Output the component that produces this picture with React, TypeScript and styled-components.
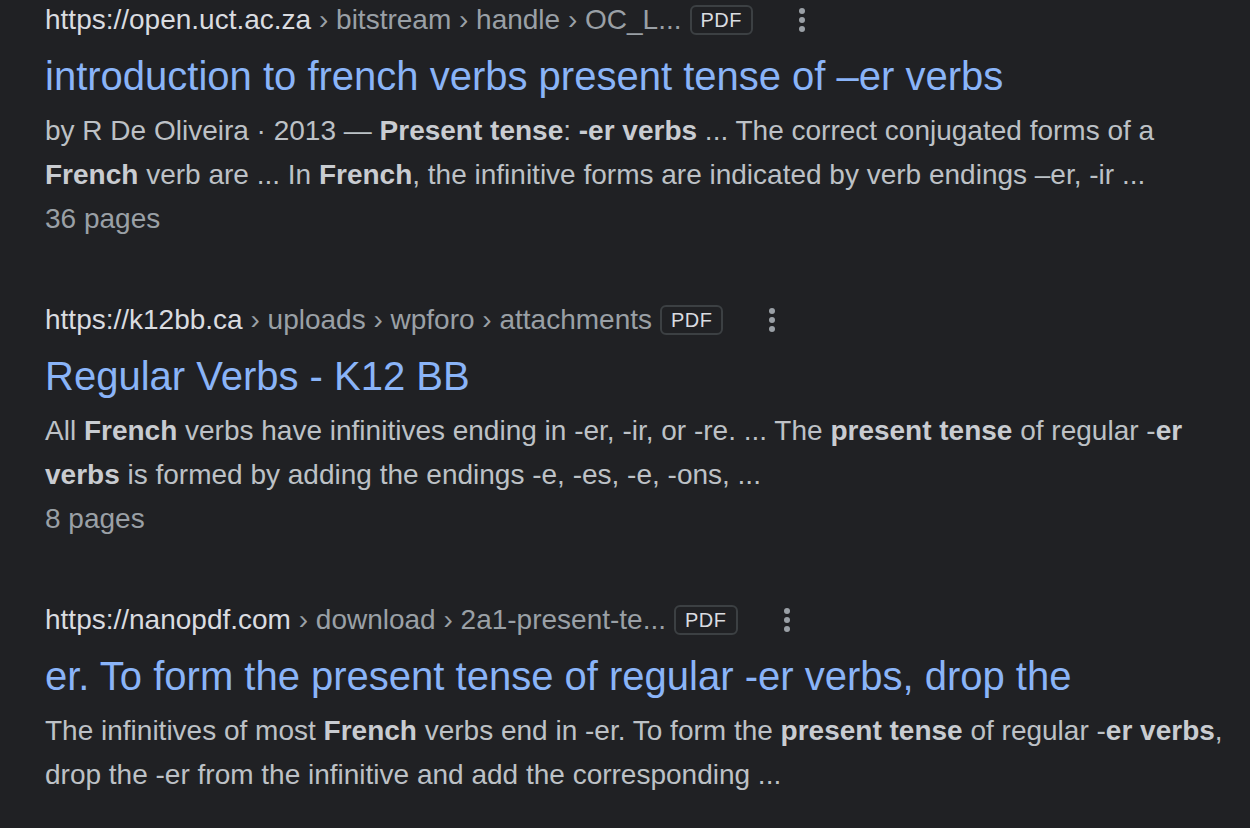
import React from "react";
import styled, { createGlobalStyle } from "styled-components";

const Global = createGlobalStyle`
  html, body { margin: 0; padding: 0; background: #202124; }
  body { font-family: "Liberation Sans", Arial, sans-serif; }
`;

const Page = styled.div`
  background: #202124;
  min-height: 828px;
  padding-left: 45px;
  overflow: hidden;
`;

const List = styled.div`
  display: flex;
  flex-direction: column;
  gap: 59px;
  width: 1190px;
`;

const Result = styled.div`
  display: flex;
  flex-direction: column;
`;

const UrlRow = styled.div`
  display: flex;
  align-items: center;
  height: 40px;
  font-size: 28px;
  line-height: 40px;
  white-space: nowrap;
`;

const Cite = styled.cite`
  font-style: normal;
  color: #dadce0;
`;

const Path = styled.span`
  color: #9aa0a6;
`;

const Badge = styled.span`
  display: inline-flex;
  align-items: center;
  box-sizing: border-box;
  height: 30px;
  margin-left: 8px;
  padding: 0 9px;
  border: 2px solid #3c4043;
  border-radius: 6px;
  font-size: 20px;
  color: #dadce0;
  letter-spacing: 0.5px;
`;

const Kebab = styled.svg`
  width: 36px;
  height: 36px;
  margin-left: 31px;
  fill: #9aa0a6;
`;

const Title = styled.div`
  margin-top: 10px;
  font-size: 40px;
  line-height: 52px;
  color: #8ab4f8;
  white-space: nowrap;
`;

const Snippet = styled.div`
  margin-top: 7px;
  font-size: 28px;
  line-height: 44px;
  color: #bdc1c6;
  b { font-weight: bold; color: #c9ccd1; }
`;

const Pages = styled.div`
  font-size: 28px;
  line-height: 44px;
  color: #9aa0a6;
`;

type R = {
  domain: string;
  path: string;
  title: string;
  snippet: React.ReactNode;
  pages?: string;
};

const results: R[] = [
  {
    domain: "https://open.uct.ac.za",
    path: "\u00a0› bitstream › handle › OC_L...",
    title: "introduction to french verbs present tense of –er verbs",
    snippet: (
      <>
        by R De Oliveira · 2013 — <b>Present tense</b>: <b>-er verbs</b> ... The correct
        conjugated forms of a <b>French</b> verb are ... In <b>French</b>, the infinitive forms
        are indicated by verb endings –er, -ir ...
      </>
    ),
    pages: "36 pages",
  },
  {
    domain: "https://k12bb.ca",
    path: "\u00a0› uploads › wpforo › attachments",
    title: "Regular Verbs - K12 BB",
    snippet: (
      <>
        All <b>French</b> verbs have infinitives ending in -er, -ir, or -re. ... The{" "}
        <b>present tense</b> of regular -<b>er verbs</b> is formed by adding the endings -e,
        -es, -e, -ons, ...
      </>
    ),
    pages: "8 pages",
  },
  {
    domain: "https://nanopdf.com",
    path: "\u00a0› download › 2a1-present-te...",
    title: "er. To form the present tense of regular -er verbs, drop the",
    snippet: (
      <>
        The infinitives of most <b>French</b> verbs end in -er. To form the{" "}
        <b>present tense</b> of regular -<b>er verbs</b>, drop the -er from the infinitive and
        add the corresponding ...
      </>
    ),
  },
];

const MoreIcon = () => (
  <Kebab viewBox="0 0 24 24" aria-hidden>
    <circle cx="12" cy="6" r="2" />
    <circle cx="12" cy="12" r="2" />
    <circle cx="12" cy="18" r="2" />
  </Kebab>
);

export default function App() {
  return (
    <>
      <Global />
      <Page>
        <List>
          {results.map((r, i) => (
            <Result key={i}>
              <UrlRow>
                <Cite>
                  {r.domain}
                  <Path>{r.path}</Path>
                </Cite>
                <Badge>PDF</Badge>
                <MoreIcon />
              </UrlRow>
              <Title>{r.title}</Title>
              <Snippet>{r.snippet}</Snippet>
              {r.pages && <Pages>{r.pages}</Pages>}
            </Result>
          ))}
        </List>
      </Page>
    </>
  );
}
